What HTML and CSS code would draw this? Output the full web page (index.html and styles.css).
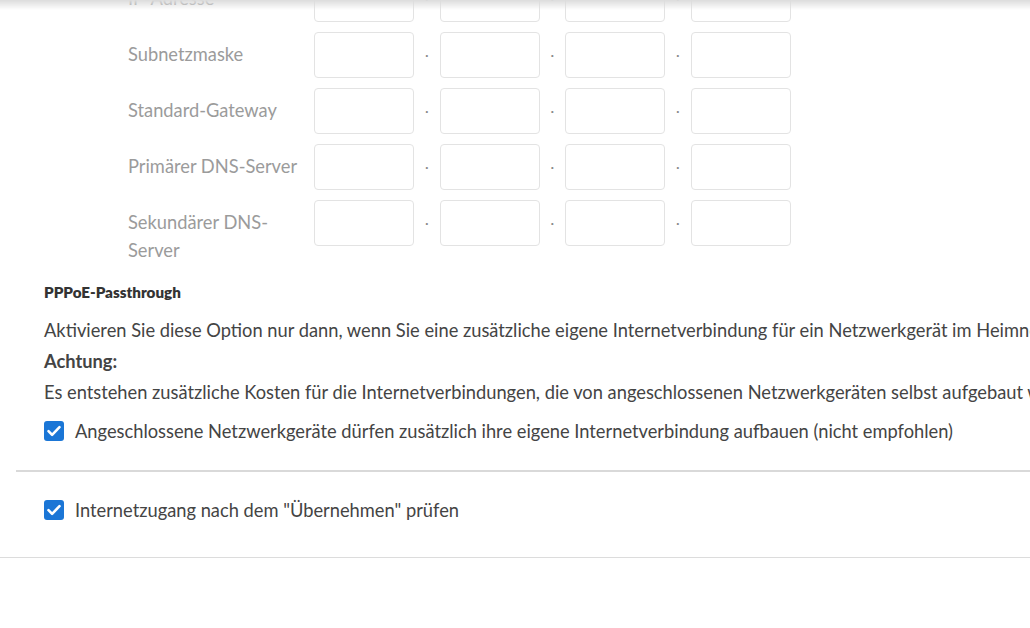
FILE: index.html
```html
<!DOCTYPE html>
<html lang="de">
<head>
  <meta charset="UTF-8">
  <meta name="viewport" content="width=device-width, initial-scale=1">
  <title>Internetzugang</title>
  <link rel="stylesheet" href="styles.css">
</head>
<body>
  <div class="topbar-shadow"></div>

  <main class="page">
    <section class="ip-block">
      <div class="ip-row">
        <label class="ip-label">IP-Adresse</label>
        <div class="ip-fields">
          <input class="octet" type="text"><span class="dot">·</span>
          <input class="octet" type="text"><span class="dot">·</span>
          <input class="octet" type="text"><span class="dot">·</span>
          <input class="octet" type="text">
        </div>
      </div>
      <div class="ip-row">
        <label class="ip-label">Subnetzmaske</label>
        <div class="ip-fields">
          <input class="octet" type="text"><span class="dot">·</span>
          <input class="octet" type="text"><span class="dot">·</span>
          <input class="octet" type="text"><span class="dot">·</span>
          <input class="octet" type="text">
        </div>
      </div>
      <div class="ip-row">
        <label class="ip-label">Standard-Gateway</label>
        <div class="ip-fields">
          <input class="octet" type="text"><span class="dot">·</span>
          <input class="octet" type="text"><span class="dot">·</span>
          <input class="octet" type="text"><span class="dot">·</span>
          <input class="octet" type="text">
        </div>
      </div>
      <div class="ip-row">
        <label class="ip-label">Primärer DNS-Server</label>
        <div class="ip-fields">
          <input class="octet" type="text"><span class="dot">·</span>
          <input class="octet" type="text"><span class="dot">·</span>
          <input class="octet" type="text"><span class="dot">·</span>
          <input class="octet" type="text">
        </div>
      </div>
      <div class="ip-row">
        <label class="ip-label">Sekundärer DNS-Server</label>
        <div class="ip-fields">
          <input class="octet" type="text"><span class="dot">·</span>
          <input class="octet" type="text"><span class="dot">·</span>
          <input class="octet" type="text"><span class="dot">·</span>
          <input class="octet" type="text">
        </div>
      </div>
    </section>

    <section class="pppoe">
      <h4>PPPoE-Passthrough</h4>
      <p>Aktivieren Sie diese Option nur dann, wenn Sie eine zusätzliche eigene Internetverbindung für ein Netzwerkgerät im Heimnetz benötigen.</p>
      <p class="warn">Achtung:</p>
      <p>Es entstehen zusätzliche Kosten für die Internetverbindungen, die von angeschlossenen Netzwerkgeräten selbst aufgebaut werden.</p>
      <label class="check">
        <span class="box">
          <svg viewBox="0 0 20 20" width="20" height="20"><path d="M4.5 10.2l3.6 3.6 7.4-7.6" fill="none" stroke="#fff" stroke-width="2.6" stroke-linecap="round" stroke-linejoin="round"/></svg>
        </span>
        Angeschlossene Netzwerkgeräte dürfen zusätzlich ihre eigene Internetverbindung aufbauen (nicht empfohlen)
      </label>
    </section>

    <hr class="divider">

    <section class="verify">
      <label class="check">
        <span class="box">
          <svg viewBox="0 0 20 20" width="20" height="20"><path d="M4.5 10.2l3.6 3.6 7.4-7.6" fill="none" stroke="#fff" stroke-width="2.6" stroke-linecap="round" stroke-linejoin="round"/></svg>
        </span>
        Internetzugang nach dem "Übernehmen" prüfen
      </label>
    </section>
  </main>
</body>
</html>
```

FILE: styles.css
```css
* {
  box-sizing: border-box;
}
html, body {
  margin: 0;
  padding: 0;
  background: #fff;
  overflow: hidden;
}
body {
  font-family: "Lato", "Open Sans", sans-serif;
  font-size: 18.3px;
  color: #444;
}

/* shadow cast by the fixed title bar above the scrolled content */
.topbar-shadow {
  position: fixed;
  top: 0;
  left: 0;
  right: 0;
  height: 10px;
  background: linear-gradient(#dcdcdc, rgba(255,255,255,0));
  z-index: 5;
}

.page {
  margin-top: -24px;
  width: 1200px;
}

/* IP address entry */
.ip-block {
  display: flex;
  flex-direction: column;
  gap: 10px;
  padding-left: 128px;
}
.ip-row {
  display: flex;
  align-items: flex-start;
  gap: 16px;
}
.ip-label {
  width: 170px;
  padding-top: 8px;
  line-height: 28px;
  color: #9b9b9b;
}
.ip-fields {
  display: flex;
  align-items: center;
}
.octet {
  width: 100px;
  height: 46px;
  border: 1px solid #e3e3e3;
  border-radius: 4px;
  background: #fff;
  font: inherit;
}
.dot {
  width: 25.5px;
  text-align: center;
  color: #8a8a8a;
  font-size: 14px;
  line-height: 1;
}

/* PPPoE section */
.pppoe {
  padding-left: 44px;
  margin-top: 18px;
}
.pppoe h4 {
  margin: 0 0 13px;
  font-size: 15.2px;
  font-weight: 800;
  color: #333;
  line-height: 20px;
}
.pppoe p {
  margin: 0;
  line-height: 31px;
  white-space: nowrap;
}
.pppoe .warn {
  font-weight: 700;
}

.check {
  display: flex;
  align-items: center;
  gap: 11px;
  line-height: 24px;
  white-space: nowrap;
}
.pppoe .check {
  margin-top: 11px;
}
.box {
  width: 20px;
  height: 20px;
  border-radius: 3px;
  background: #1b76d6;
  display: flex;
}

.divider {
  margin: 27px 0 0 16px;
  border: 0;
  border-top: 2px solid #d9d9d9;
}

.verify {
  padding: 26px 0 35px 44px;
  border-bottom: 1px solid #dcdcdc;
}
```
